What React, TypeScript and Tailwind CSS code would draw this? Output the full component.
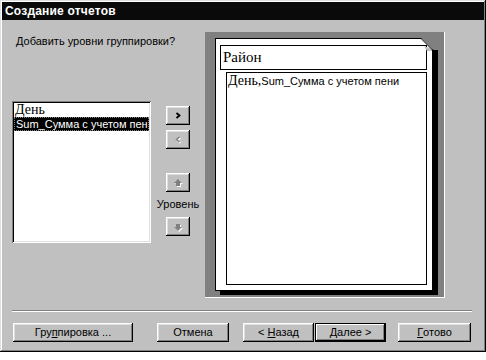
const raised =
  "shadow-[inset_-1px_-1px_0_#000,inset_1px_1px_0_#fff,inset_-2px_-2px_0_#808080,inset_2px_2px_0_#dfdfdf]";

const Btn = ({ w, ml, def, children }: { w: string; ml: string; def?: boolean; children: React.ReactNode }) => (
  <div
    className={`${w} ${ml} h-[19px] flex items-center justify-center bg-[#c0c0c0] text-[11px] text-black ${
      def ? "border border-black shadow-[inset_-1px_-1px_0_#000,inset_1px_1px_0_#fff,inset_-2px_-2px_0_#808080]" : raised
    }`}
  >
    {children}
  </div>
);

const SmallBtn = ({ children, className = "" }: { children: React.ReactNode; className?: string }) => (
  <div className={`w-[24px] h-[19px] bg-[#c0c0c0] ${raised} ${className}`}>
    <svg width="24" height="19" viewBox="0 0 24 19">
      {children}
    </svg>
  </div>
);

export default function App() {
  return (
    <div className="w-[486px] h-[360px] bg-white" style={{ fontFamily: '"Liberation Sans", Arial, sans-serif' }}>
      <div className="w-[486px] h-[352px] bg-[#c0c0c0] flex flex-col p-[2px] shadow-[inset_-1px_-1px_0_#000,inset_1px_1px_0_#dfdfdf,inset_-2px_-2px_0_#808080,inset_2px_2px_0_#fff]">
        {/* title bar */}
        <div className="h-[18px] bg-[#0a0a0a] text-white font-bold text-[12px] pl-[3px] flex items-center tracking-[0.2px]">
          Создание отчетов
        </div>

        <div className="flex h-[280px]">
          <div className="w-[203px] pl-[10px] flex flex-col">
            <div className="mt-[15px] ml-[4px] text-[11px] leading-[13px] text-black">Добавить уровни группировки?</div>
            <div className="mt-[53px] flex">
              {/* list box */}
              <div className="w-[139px] h-[142px] bg-white p-[2px] shadow-[inset_1px_1px_0_#808080,inset_-1px_-1px_0_#fff,inset_2px_2px_0_#000,inset_-2px_-2px_0_#dfdfdf] overflow-hidden">
                <div
                  className="h-[14px] leading-[14px] text-[14px] text-black pl-[1px]"
                  style={{ fontFamily: '"Liberation Serif", "Times New Roman", serif' }}
                >
                  День
                </div>
                <div className="h-[14px] leading-[12px] text-[11px] bg-black text-white pl-[1px] whitespace-nowrap overflow-hidden border border-dotted border-[#808080]">
                  Sum_Сумма с учетом пени
                </div>
              </div>
              {/* move buttons */}
              <div className="w-[44px] ml-[5px] flex flex-col items-center pt-[5px]">
                <SmallBtn>
                  <path d="M10.5 7 L13.5 9.5 L10.5 12" stroke="#000" strokeWidth="1.8" fill="none" />
                </SmallBtn>
                <SmallBtn className="mt-[5px]">
                  <path d="M14.5 8 L11.5 10.5 L14.5 13" stroke="#fff" strokeWidth="1.5" fill="none" />
                  <path d="M13.5 7 L10.5 9.5 L13.5 12" stroke="#808080" strokeWidth="1.5" fill="none" />
                </SmallBtn>
                <SmallBtn className="mt-[24px]">
                  <polygon points="13,7 17,11 15,11 15,14 11,14 11,11 9,11" fill="#fff" />
                  <polygon points="12,6 16,10 14,10 14,13 10,13 10,10 8,10" fill="#808080" />
                </SmallBtn>
                <div className="mt-[3px] h-[18px] text-[11px] leading-[18px] text-black">Уровень</div>
                <SmallBtn className="mt-[4px]">
                  <polygon points="13,15 17,11 15,11 15,8 11,8 11,11 9,11" fill="#fff" />
                  <polygon points="12,14 16,10 14,10 14,7 10,7 10,10 8,10" fill="#808080" />
                </SmallBtn>
              </div>
            </div>
          </div>

          {/* preview */}
          <div className="mt-[12px] w-[240px] h-[266px] bg-[#808080] shadow-[inset_-1px_-1px_0_#fff] pl-[10px] pt-[6px]">
            <div className="relative w-[218px] h-[253px] bg-white border border-black shadow-[5px_4px_0_#000]">
              <svg className="absolute left-[205px] top-[-1px]" width="18" height="13" viewBox="0 0 18 13">
                <polygon points="0,0 18,0 18,12 12,12" fill="#808080" />
                <polygon points="3,8 11,11 11,13 6,13" fill="#c0c0c0" />
                <line x1="0" y1="0.5" x2="11.5" y2="12" stroke="#000" strokeWidth="1" />
                <rect x="12" y="12" width="5" height="1" fill="#000" />
              </svg>
              <div
                className="ml-[4px] mt-[6px] w-[207px] h-[25px] border border-black pl-[2px] text-[15px] leading-[23px] text-black"
                style={{ fontFamily: '"Liberation Serif", "Times New Roman", serif' }}
              >
                Район
              </div>
              <div className="ml-[10px] mt-[2px] w-[201px] h-[213px] border border-black pl-[1px] pt-[1px] text-[11px] leading-[14px] text-black whitespace-nowrap">
                <span className="text-[14px]" style={{ fontFamily: '"Liberation Serif", "Times New Roman", serif' }}>
                  День,
                </span>
                Sum_Сумма с учетом пени
              </div>
            </div>
          </div>
        </div>

        {/* separator */}
        <div className="mt-[10px] ml-[10px] mr-[12px] h-[2px] border-t border-t-[#808080] border-b border-b-white" />

        <div className="flex mt-[11px]">
          <Btn w="w-[120px]" ml="ml-[11px]">
            Гру<span className="underline">п</span>пировка ...
          </Btn>
          <Btn w="w-[72px]" ml="ml-[24px]">
            Отмена
          </Btn>
          <Btn w="w-[71px]" ml="ml-[14px]">
            &lt;&nbsp;<span className="underline">Н</span>азад
          </Btn>
          <Btn w="w-[71px]" ml="ml-[1px]" def>
            <span className="underline">Д</span>алее&nbsp;&gt;
          </Btn>
          <Btn w="w-[73px]" ml="ml-[12px]">
            <span className="underline">Г</span>отово
          </Btn>
        </div>
      </div>
    </div>
  );
}
